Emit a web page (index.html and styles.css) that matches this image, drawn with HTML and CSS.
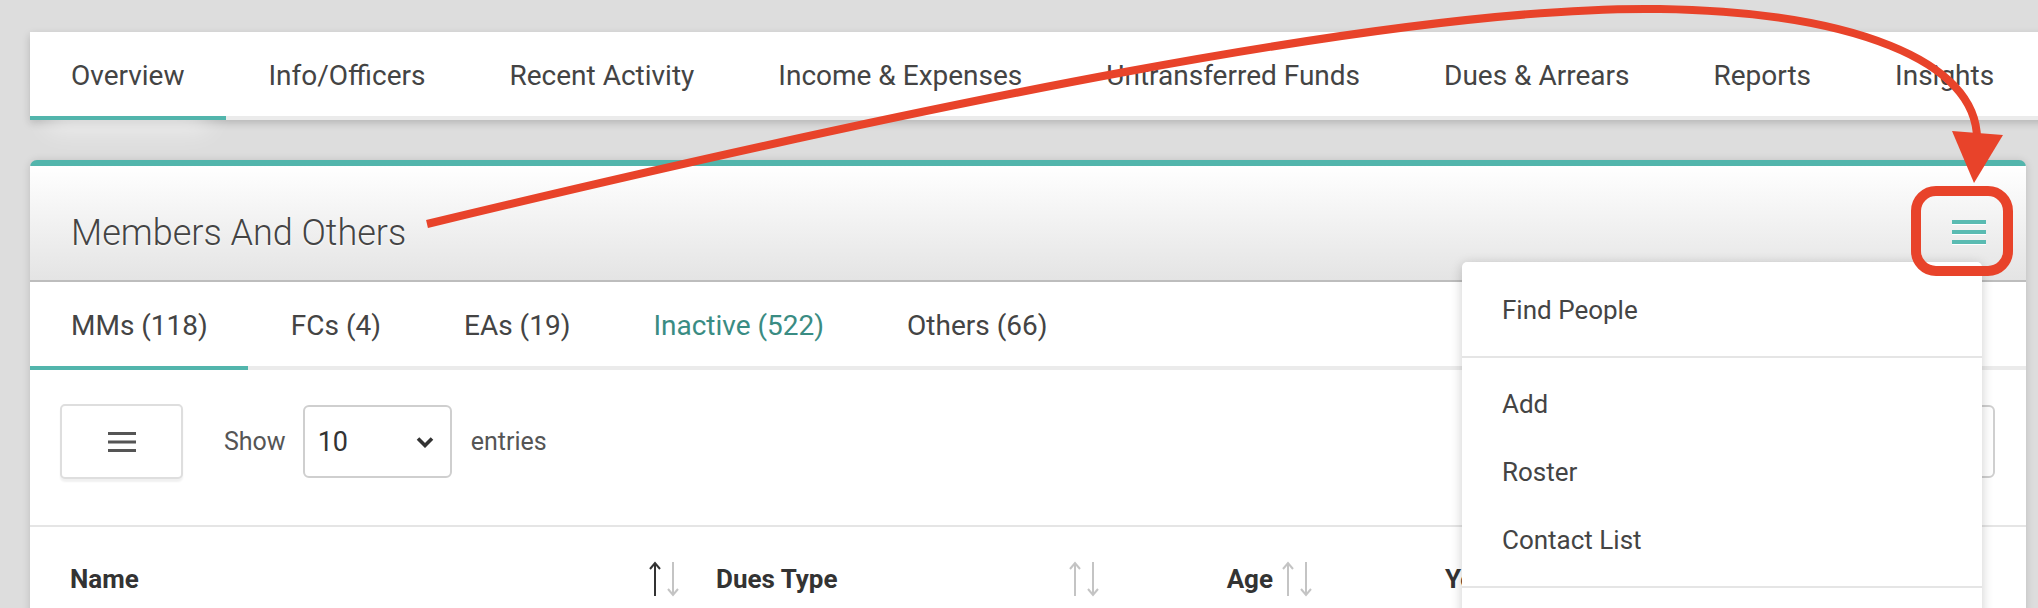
FILE: index.html
```html
<!DOCTYPE html>
<html lang="en">
<head>
    <meta charset="UTF-8">
    <title>Members And Others</title>
    <link rel="stylesheet" href="styles.css">
</head>
<body>
    <div class="page">
        <nav class="topnav">
            <a class="active">Overview</a>
            <a>Info/Officers</a>
            <a>Recent Activity</a>
            <a>Income &amp; Expenses</a>
            <a>Untransferred Funds</a>
            <a>Dues &amp; Arrears</a>
            <a>Reports</a>
            <a>Insights</a>
        </nav>

        <section class="card">
            <header class="card-head">
                <h2>Members And Others</h2>
                <button class="menu-btn"><span></span><span></span><span></span></button>
            </header>

            <div class="dropdown">
                <a>Find People</a>
                <hr>
                <a>Add</a>
                <a>Roster</a>
                <a>Contact List</a>
                <hr>
                <div class="more"></div>
            </div>

            <div class="subtabs">
                <a class="active">MMs (118)</a>
                <a>FCs (4)</a>
                <a>EAs (19)</a>
                <a class="inactive">Inactive (522)</a>
                <a>Others (66)</a>
            </div>

            <div class="controls">
                <div class="length">
                    <button class="cols-btn">
                        <svg width="28" height="22" viewBox="0 0 28 22"><path d="M0 2.5h28M0 11h28M0 19.5h28" stroke="#555" stroke-width="3"/></svg>
                    </button>
                    <span class="show">Show</span>
                    <div class="select">
                        <span>10</span>
                        <svg width="18" height="12" viewBox="0 0 18 12"><path d="M2 2.5l7 7 7-7" fill="none" stroke="#333" stroke-width="3.6"/></svg>
                    </div>
                    <span class="entries">entries</span>
                </div>
                <div class="search">
                    <span>Search:</span>
                    <input type="text">
                </div>
            </div>

            <div class="thead">
                <div class="th">Name
                    <svg class="sort" width="36" height="36" viewBox="0 0 36 36"><path d="M9 35V2M4 8l5-6 5 6" fill="none" stroke="#333" stroke-width="2"/><path d="M27 1v33M22 28l5 6 5-6" fill="none" stroke="#c4c4c4" stroke-width="2"/></svg>
                </div>
                <div class="th">Dues Type
                    <svg class="sort" width="36" height="36" viewBox="0 0 36 36"><path d="M9 35V2M4 8l5-6 5 6" fill="none" stroke="#c4c4c4" stroke-width="2"/><path d="M27 1v33M22 28l5 6 5-6" fill="none" stroke="#c4c4c4" stroke-width="2"/></svg>
                </div>
                <div class="th num">Age
                    <svg class="sort" width="36" height="36" viewBox="0 0 36 36"><path d="M9 35V2M4 8l5-6 5 6" fill="none" stroke="#c4c4c4" stroke-width="2"/><path d="M27 1v33M22 28l5 6 5-6" fill="none" stroke="#c4c4c4" stroke-width="2"/></svg>
                </div>
                <div class="th last">Years</div>
            </div>
        </section>
    </div>

    <!-- red call-out drawn over the page -->
    <svg class="annot" width="2038" height="608" viewBox="0 0 2038 608">
        <path d="M427 224C900 110 1400 5 1660 9C1850 12 1978 60 1977 140" fill="none" stroke="#e8432a" stroke-width="8"/>
        <polygon points="1952,131 2003,135 1974,183" fill="#e8432a"/>
        <rect x="1916" y="191" width="92" height="80" rx="20" fill="none" stroke="#e8432a" stroke-width="10"/>
    </svg>
</body>
</html>
```

FILE: styles.css
```css
body {
    margin: 0;
    background: #dddddd;
    font-family: Roboto, "Noto Sans", sans-serif;
    overflow: hidden;
    position: relative;
}
.page {
    padding: 32px 12px 0 30px;
}
.topnav {
    display: flex;
    width: 2100px;
    background: #fff;
    border-bottom: 4px solid #ebebeb;
    box-shadow: 0 3px 8px rgba(0, 0, 0, 0.18);
}
.topnav a, .subtabs a {
    padding: 30px 40px 26px;
    margin: 0 3px -4px 0;
    border-bottom: 4px solid transparent;
    font-size: 28px;
    line-height: 28px;
    color: #444;
    white-space: nowrap;
}
.topnav a {
    padding-left: 41px;
    padding-right: 41px;
    margin-right: 2px;
}
.subtabs a:first-child {
    padding-left: 41px;
}
.topnav a.active, .subtabs a.active {
    border-bottom-color: #52b5ac;
}
.topnav a.active {
    box-shadow: 0 28px 26px -18px rgba(255, 255, 255, 0.55);
}
.card {
    position: relative;
    margin-top: 40px;
    background: #fff;
    border-top: 6px solid #52b5ac;
    border-radius: 7px 7px 0 0;
    box-shadow: 0 1px 8px rgba(0, 0, 0, 0.15);
}
.card-head {
    display: flex;
    justify-content: space-between;
    align-items: center;
    padding: 46px 40px 26px 41px;
    background: linear-gradient(#fff, #e4e4e4);
    border-bottom: 2px solid #bdbdbd;
}
.card-head h2 {
    margin: 0;
    font-size: 36px;
    line-height: 42px;
    font-weight: 300;
    color: #444;
    text-shadow: 0 1px 2px #fff;
}
.menu-btn {
    display: flex;
    flex-direction: column;
    gap: 6px;
    width: 34px;
    margin-top: -2px;
    padding: 0;
    border: none;
    background: none;
}
.menu-btn span {
    height: 4px;
    background: #5abbb2;
    box-shadow: 0 1px 0 #fff;
}
.subtabs {
    display: flex;
    border-bottom: 4px solid #ebebeb;
}
.subtabs a.inactive {
    color: #3a8c83;
}
.controls {
    display: flex;
    justify-content: space-between;
    align-items: center;
    padding: 34px 31px 46px 30px;
    border-bottom: 2px solid #e5e5e5;
}
.length, .search {
    display: flex;
    align-items: center;
    font-size: 25px;
    color: #555;
}
.cols-btn {
    display: flex;
    align-items: center;
    justify-content: center;
    width: 123px;
    height: 75px;
    background: #fff;
    border: 2px solid #dedede;
    border-radius: 5px;
    box-shadow: 0 3px 2px rgba(0, 0, 0, 0.06);
}
.show {
    margin-left: 41px;
}
.select {
    display: flex;
    align-items: center;
    justify-content: space-between;
    box-sizing: border-box;
    width: 149px;
    height: 73px;
    margin-left: 17px;
    padding: 0 16px 0 13px;
    border: 2px solid #cfcfcf;
    border-radius: 6px;
    font-size: 27px;
    color: #333;
}
.entries {
    margin-left: 19px;
}
.search input {
    box-sizing: border-box;
    width: 330px;
    height: 73px;
    margin-left: 14px;
    border: 2px solid #cfcfcf;
    border-radius: 6px;
}
.thead {
    display: grid;
    grid-template-columns: 660px 420px 213px 1fr;
}
.th {
    display: flex;
    align-items: center;
    justify-content: space-between;
    padding: 34px 8px 20px 26px;
    font-size: 26px;
    line-height: 30px;
    font-weight: 700;
    color: #333;
}
.th:first-child {
    padding-left: 40px;
}
.th.num {
    justify-content: flex-end;
    gap: 6px;
}
.th.last {
    justify-content: flex-start;
    padding-left: 122px;
}
.dropdown {
    position: absolute;
    top: 96px;
    right: 44px;
    width: 520px;
    padding: 14px 0 0;
    background: #fff;
    border-radius: 5px;
    box-shadow: 0 2px 12px rgba(0, 0, 0, 0.2);
    z-index: 5;
}
.dropdown a {
    display: block;
    padding: 20px 40px;
    font-size: 26px;
    line-height: 28px;
    color: #444;
}
.dropdown hr {
    height: 2px;
    margin: 12px 0;
    border: 0;
    background: #e5e5e5;
}
.dropdown .more {
    height: 40px;
}
.annot {
    position: absolute;
    top: 0;
    left: 0;
    z-index: 10;
}
```
